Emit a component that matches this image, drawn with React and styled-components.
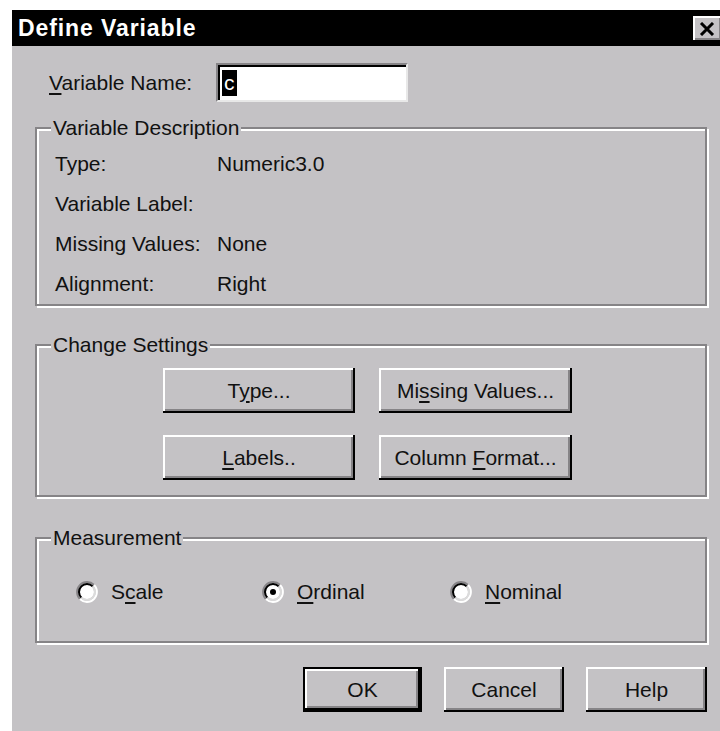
import React from 'react'
import styled, { createGlobalStyle } from 'styled-components'

const face = '#c4c2c5'
const shade = '#868487'
const light = '#ffffff'

const GlobalStyle = createGlobalStyle`
  html, body {
    margin: 0;
    background: #ffffff;
  }
  body {
    font-family: "Liberation Sans", Arial, sans-serif;
    font-size: 21px;
    color: #111;
  }
`

const Dialog = styled.div`
  margin: 10px 0 0 12px;
  min-height: calc(100vh - 10px);
  background: ${face};
  display: flex;
  flex-direction: column;
  overflow: hidden;
`

const TitleBar = styled.div`
  height: 36px;
  background: #000;
  display: flex;
  align-items: center;
  padding-left: 6px;
`

const TitleText = styled.div`
  color: #fff;
  font-weight: 700;
  font-size: 23px;
  letter-spacing: 0.9px;
  flex: 1;
`

/* the right edge of the close box runs past the window edge */
const CloseBox = styled.button`
  flex: none;
  width: 30px;
  height: 26px;
  margin: 2px -3px 0 0;
  padding: 0 3px 0 0;
  border: 0;
  background: ${face};
  box-shadow: inset -2px -2px 0 #000, inset 2px 2px 0 ${light}, inset -4px -4px 0 ${shade};
  display: flex;
  align-items: center;
  justify-content: center;
`

const Body = styled.div`
  padding: 17px 13px 0 23px;
  display: flex;
  flex-direction: column;
`

const NameRow = styled.div`
  display: flex;
  align-items: center;
  height: 39px;
  padding-left: 14px;
`

const NameLabel = styled.label`
  width: 167px;
`

const NameInput = styled.div`
  width: 192px;
  height: 39px;
  box-sizing: border-box;
  background: #fff;
  border: 2px solid;
  border-color: ${shade} #e8e8e8 #e8e8e8 ${shade};
  box-shadow: inset 2px 2px 0 #000;
  display: flex;
  align-items: center;
  padding-left: 4px;
`

const Selected = styled.span`
  background: #000;
  color: #fff;
  line-height: 26px;
  padding: 0 2px;
`

const Key = styled.u`
  text-decoration: underline;
  text-underline-offset: 3px;
`

const Group = styled.fieldset`
  margin: ${({ $gap }) => $gap}px 0 0 0;
  padding: 0;
  min-width: 0;
  border: 2px solid ${shade};
  box-shadow: inset 2px 2px 0 ${light}, 2px 2px 0 ${light};
`

const Caption = styled.legend`
  margin-left: 14px;
  padding: 0 2px;
  line-height: 24px;
  background: ${face};
`

const InfoGrid = styled.div`
  display: grid;
  grid-template-columns: 162px auto;
  line-height: 40px;
  padding: 4px 0 0 18px;
`

const ButtonGrid = styled.div`
  display: grid;
  grid-template-columns: 192px 193px;
  grid-auto-rows: 45px;
  column-gap: 24px;
  row-gap: 22px;
  padding: 11px 0 15px 126px;
`

const Button = styled.button`
  font: inherit;
  color: #111;
  background: ${face};
  width: ${({ $w }) => ($w ? `${$w}px` : 'auto')};
  height: 45px;
  padding: 0;
  border: ${({ $default }) => ($default ? '2px solid #000' : '0')};
  box-shadow: inset -2px -2px 0 #000, inset 2px 2px 0 ${light}, inset -4px -4px 0 ${shade};
`

const RadioRow = styled.div`
  display: grid;
  grid-template-columns: 186px 188px auto;
  padding: 30px 0 37px 39px;
`

const RadioItem = styled.label`
  display: flex;
  align-items: center;
  gap: 13px;
  height: 24px;
`

const Actions = styled.div`
  display: flex;
  justify-content: flex-end;
  gap: 22px;
  margin-top: 24px;
`

const RadioMark = ({ checked }) => (
  <svg width="22" height="22" viewBox="0 0 22 22">
    <circle cx="11" cy="11" r="7" fill="#fff" />
    <path d="M3.93 18.07A10 10 0 0 1 18.07 3.93" stroke={shade} strokeWidth="2" fill="none" />
    <path d="M18.07 3.93A10 10 0 0 1 3.93 18.07" stroke="#fff" strokeWidth="2" fill="none" />
    <path d="M5.34 16.66A8 8 0 0 1 16.66 5.34" stroke="#000" strokeWidth="2" fill="none" />
    <path d="M16.66 5.34A8 8 0 0 1 5.34 16.66" stroke="#dcdcdc" strokeWidth="2" fill="none" />
    {checked && <circle cx="11" cy="11" r="3" fill="#000" />}
  </svg>
)

const Radio = ({ checked, children }) => (
  <RadioItem>
    <RadioMark checked={checked} />
    <span>{children}</span>
  </RadioItem>
)

const info = [
  ['Type:', 'Numeric3.0'],
  ['Variable Label:', ''],
  ['Missing Values:', 'None'],
  ['Alignment:', 'Right'],
]

export default function App() {
  return (
    <>
      <GlobalStyle />
      <Dialog>
        <TitleBar>
          <TitleText>Define Variable</TitleText>
          <CloseBox aria-label="Close">
            <svg width="16" height="14" viewBox="0 0 16 14">
              <path d="M2 1L14 13M14 1L2 13" stroke="#000" strokeWidth="3" />
            </svg>
          </CloseBox>
        </TitleBar>

        <Body>
          <NameRow>
            <NameLabel><Key>V</Key>ariable Name:</NameLabel>
            <NameInput><Selected>c</Selected></NameInput>
          </NameRow>

          <Group $gap={14}>
            <Caption>Variable Description</Caption>
            <InfoGrid>
              {info.map(([k, v]) => (
                <React.Fragment key={k}>
                  <span>{k}</span>
                  <span>{v}</span>
                </React.Fragment>
              ))}
            </InfoGrid>
          </Group>

          <Group $gap={27}>
            <Caption>Change Settings</Caption>
            <ButtonGrid>
              <Button>T<Key>y</Key>pe...</Button>
              <Button>Mi<Key>s</Key>sing Values...</Button>
              <Button><Key>L</Key>abels..</Button>
              <Button>Column <Key>F</Key>ormat...</Button>
            </ButtonGrid>
          </Group>

          <Group $gap={29}>
            <Caption>Measurement</Caption>
            <RadioRow>
              <Radio>S<Key>c</Key>ale</Radio>
              <Radio checked><Key>O</Key>rdinal</Radio>
              <Radio><Key>N</Key>ominal</Radio>
            </RadioRow>
          </Group>

          <Actions>
            <Button $w={119} $default>OK</Button>
            <Button $w={120}>Cancel</Button>
            <Button $w={121}>Help</Button>
          </Actions>
        </Body>
      </Dialog>
    </>
  )
}
